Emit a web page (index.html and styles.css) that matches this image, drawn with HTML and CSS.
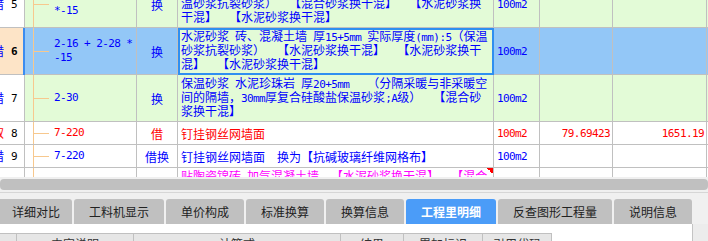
FILE: index.html
```html
<!DOCTYPE html>
<html lang="zh">
<head>
<meta charset="utf-8">
<title>工程量明细</title>
<link rel="stylesheet" href="styles.css">
</head>
<body>
<div class="app">
  <div class="grid-view">
    <div class="grid">
      <div class="row tall green txt-blue">
        <div class="c0"><span class="flag fb"><span>借</span></span><span class="no">5</span></div>
        <div class="c1"><div class="code"><div>2-16 + 2-28</div><div>*-15</div></div></div>
        <div class="c2">换</div>
        <div class="c3">
          <div class="ln">保温砂浆<span class="a"> </span>砖、混凝土墙<span class="a"> </span>厚<span class="a">15+5mm </span>实际厚度<span class="a">(mm):5</span>（保</div>
          <div class="ln">温砂浆抗裂砂浆）<span class="a">  </span>【混合砂浆换干混】<span class="a">  </span>【水泥砂浆换</div>
          <div class="ln">干混】<span class="a">  </span>【水泥砂浆换干混】</div>
        </div>
        <div class="c4 mono">100m2</div>
        <div class="c5"></div>
        <div class="c6"></div>
        <div class="c7"></div>
      </div>

      <div class="row tall sel txt-blue">
        <div class="c0"><span class="flag fb"><span>借</span></span><span class="no bold">6</span></div>
        <div class="c1"><div class="code"><div>2-16 + 2-28 *</div><div>-15</div></div></div>
        <div class="c2">换</div>
        <div class="c3 edit">
          <div class="ln">水泥砂浆<span class="a"> </span>砖、混凝土墙<span class="a"> </span>厚<span class="a">15+5mm </span>实际厚度<span class="a">(mm):5</span>（保温</div>
          <div class="ln">砂浆抗裂砂浆）<span class="a">  </span>【水泥砂浆换干混】<span class="a">  </span>【水泥砂浆换干</div>
          <div class="ln">混】<span class="a">  </span>【水泥砂浆换干混】</div>
        </div>
        <div class="c4 mono">100m2</div>
        <div class="c5"></div>
        <div class="c6"></div>
        <div class="c7"></div>
      </div>

      <div class="row tall green txt-blue">
        <div class="c0"><span class="flag fb"><span>借</span></span><span class="no">7</span></div>
        <div class="c1"><div class="code"><div>2-30</div></div></div>
        <div class="c2">换</div>
        <div class="c3">
          <div class="ln">保温砂浆<span class="a"> </span>水泥珍珠岩<span class="a"> </span>厚<span class="a">20+5mm   </span>（分隔采暖与非采暖空</div>
          <div class="ln">间的隔墙，<span class="a">30mm</span>厚复合硅酸盐保温砂浆<span class="a">;A</span>级）<span class="a">  </span>【混合砂</div>
          <div class="ln">浆换干混】</div>
        </div>
        <div class="c4 mono">100m2</div>
        <div class="c5"></div>
        <div class="c6"></div>
        <div class="c7"></div>
      </div>

      <div class="row short white txt-red">
        <div class="c0"><span class="flag fr"><span>取</span></span><span class="no">8</span></div>
        <div class="c1"><div class="code"><div>7-220</div></div></div>
        <div class="c2">借</div>
        <div class="c3 one">钉挂钢丝网墙面</div>
        <div class="c4 mono">100m2</div>
        <div class="c5 mono">79.69423</div>
        <div class="c6 mono">1651.19</div>
        <div class="c7"></div>
      </div>

      <div class="row short white txt-blue">
        <div class="c0"><span class="flag fb"><span>借</span></span><span class="no">9</span></div>
        <div class="c1"><div class="code"><div>7-220</div></div></div>
        <div class="c2">借换</div>
        <div class="c3 one">钉挂钢丝网墙面<span class="a">  </span>换为【抗碱玻璃纤维网格布】</div>
        <div class="c4 mono">100m2</div>
        <div class="c5"></div>
        <div class="c6"></div>
        <div class="c7"></div>
      </div>

      <div class="row tall white txt-mag">
        <div class="c0"><span class="flag fb"><span>借</span></span><span class="no">10</span></div>
        <div class="c1"><div class="code"><div>7-221</div></div></div>
        <div class="c2">换</div>
        <div class="c3 mark">
          <div class="ln">贴陶瓷锦砖<span class="a"> </span>加气混凝土墙<span class="a">  </span>【水泥砂浆换干混】<span class="a">  </span>【混合</div>
          <div class="ln">砂浆换干混】</div>
          <div class="ln"></div>
        </div>
        <div class="c4 mono">100m2</div>
        <div class="c5"></div>
        <div class="c6"></div>
        <div class="c7"></div>
      </div>
    </div>
  </div>

  <div class="hscroll"><div class="thumb"></div></div>

  <div class="tabbar">
    <div class="tab w72">详细对比</div>
    <div class="tab w90">工料机显示</div>
    <div class="tab w78">单价构成</div>
    <div class="tab w78">标准换算</div>
    <div class="tab w78">换算信息</div>
    <div class="tab w90 active">工程里明细</div>
    <div class="tab w114">反查图形工程量</div>
    <div class="tab w78">说明信息</div>
  </div>

  <div class="panel">
    <div class="pmain">
      <div class="hrow">
        <div class="h"></div>
        <div class="h">内容说明</div>
        <div class="h">计算式</div>
        <div class="h">结果</div>
        <div class="h">累加标识</div>
        <div class="h">引用代码</div>
      </div>
    </div>
    <div class="vbar"></div>
  </div>
</div>
</body>
</html>
```

FILE: styles.css
```css
* { box-sizing: border-box; margin: 0; padding: 0; }
html, body { width: 708px; height: 241px; overflow: hidden; }
body {
  background: #f0f0f0;
  font-family: "Noto Sans CJK SC", "Noto Sans", sans-serif;
  font-size: 12px;
  color: #000;
}
.app { display: flex; flex-direction: column; height: 241px; }

/* ---------- grid ---------- */
.grid-view { height: 177px; overflow: hidden; background: #fff; flex-shrink: 0; }
.grid { margin-top: -19px; }
.row {
  display: grid;
  grid-template-columns: 25px 112px 41px 316px 46px 73px 94px 1fr;
}
.row > div {
  border-right: 1px solid #c0c0c0;
  border-bottom: 1px solid #c0c0c0;
  overflow: hidden;
}
.row > .c7 { border-right: 0; }
.tall { height: 47px; }
.short { height: 23px; }

.green > div { background-color: #e3fbd7; }
.sel > div { background-color: #93c7f7; }
.white > div { background-color: #fff; }
.row > .c0 { background-color: #fff; }
.sel > .c0 { background-color: #fde4c7; }
.sel > .c3 { background-color: #e3fbd7; }

.txt-blue > div { color: #0000ff; }
.txt-red > div { color: #ff0000; }
.txt-mag > div { color: #ff00ff; }

.c0 { display: flex; align-items: center; }
.row > .c0 { color: #000; }
.flag {
  width: 4px;
  flex-shrink: 0;
  display: flex;
  justify-content: flex-end;
  overflow: hidden;
}
.flag > span { flex-shrink: 0; font-size: 12px; line-height: 14px; }
.fb { color: #0000ff; }
.fr { color: #ff0000; }
.no {
  flex: 1;
  text-align: center;
  font-family: "DejaVu Sans Mono", monospace;
  font-size: 11px;
  letter-spacing: -0.6px;
  overflow: hidden;
  white-space: nowrap;
}
.bold { font-weight: bold; }

.c1 {
  display: flex;
  align-items: center;
  padding-left: 29px;
  background-image: linear-gradient(#f7c88e, #f7c88e), linear-gradient(#f7c88e, #f7c88e);
  background-repeat: no-repeat;
  background-size: 1px 100%, 16px 1px;
  background-position: 8px 0, 8px 50%;
}
.sel > .c1 { box-shadow: -2px 0 0 #3b8cf0; }
.code, .mono, .a {
  font-family: "DejaVu Sans Mono", monospace;
  font-size: 11px;
  letter-spacing: -0.6px;
}
.code > div { line-height: 14px; white-space: pre; }

.c2 { display: flex; align-items: center; justify-content: center; white-space: nowrap; }

.c3 { padding: 1px 0 0 3px; }
.ln { height: 14px; line-height: 14px; white-space: pre; overflow: hidden; }
.c3.one { display: flex; align-items: center; padding-top: 0; white-space: pre; }
.c3.edit { outline: 2px solid #2f8ff0; outline-offset: -2px; }
.c3.mark {
  background-image: linear-gradient(to bottom left, #ff0000 50%, transparent 50%);
  background-repeat: no-repeat;
  background-position: top right;
  background-size: 6px 6px;
}

.c4 { display: flex; align-items: center; padding-left: 3px; white-space: pre; }
.c5, .c6 { display: flex; align-items: center; justify-content: flex-end; padding-right: 2px; white-space: pre; }

/* ---------- horizontal scrollbar ---------- */
.hscroll {
  height: 16px;
  padding-top: 2px;
  background: #f0f0f0;
  border-bottom: 1px solid #d6d6d6;
  flex-shrink: 0;
}
.thumb { height: 11px; background: #c0c0c0; border-radius: 4px; }

/* ---------- tabs ---------- */
.tabbar {
  height: 31px;
  padding-top: 6px;
  display: flex;
  gap: 2px;
  background: #f0f0f0;
  flex-shrink: 0;
}
.tab {
  height: 25px;
  line-height: 25px;
  text-align: center;
  background: #c0c0c0;
  color: #222;
  font-size: 12px;
  border-radius: 3px 3px 0 0;
  white-space: nowrap;
}
.tab.active { background: #4b9cf8; color: #fff; font-weight: bold; }
.w72 { width: 72px; border-top-left-radius: 0; }
.w78 { width: 78px; }
.w90 { width: 90px; }
.w114 { width: 114px; }

/* ---------- bottom panel ---------- */
.panel { flex: 1; display: flex; background: #fff; }
.pmain { flex: 1; padding-top: 9px; overflow: hidden; }
.vbar { width: 16px; background: #ececec; border-left: 1px solid #c4c4c4; }
.hrow {
  display: grid;
  grid-template-columns: 17px 117px 207px 63px 79px 69px;
}
.h {
  height: 20px;
  line-height: 19px;
  background: #e6e6e6;
  border-top: 1px solid #c0c0c0;
  border-right: 1px solid #c0c0c0;
  text-align: center;
  color: #333;
  white-space: nowrap;
}
```
